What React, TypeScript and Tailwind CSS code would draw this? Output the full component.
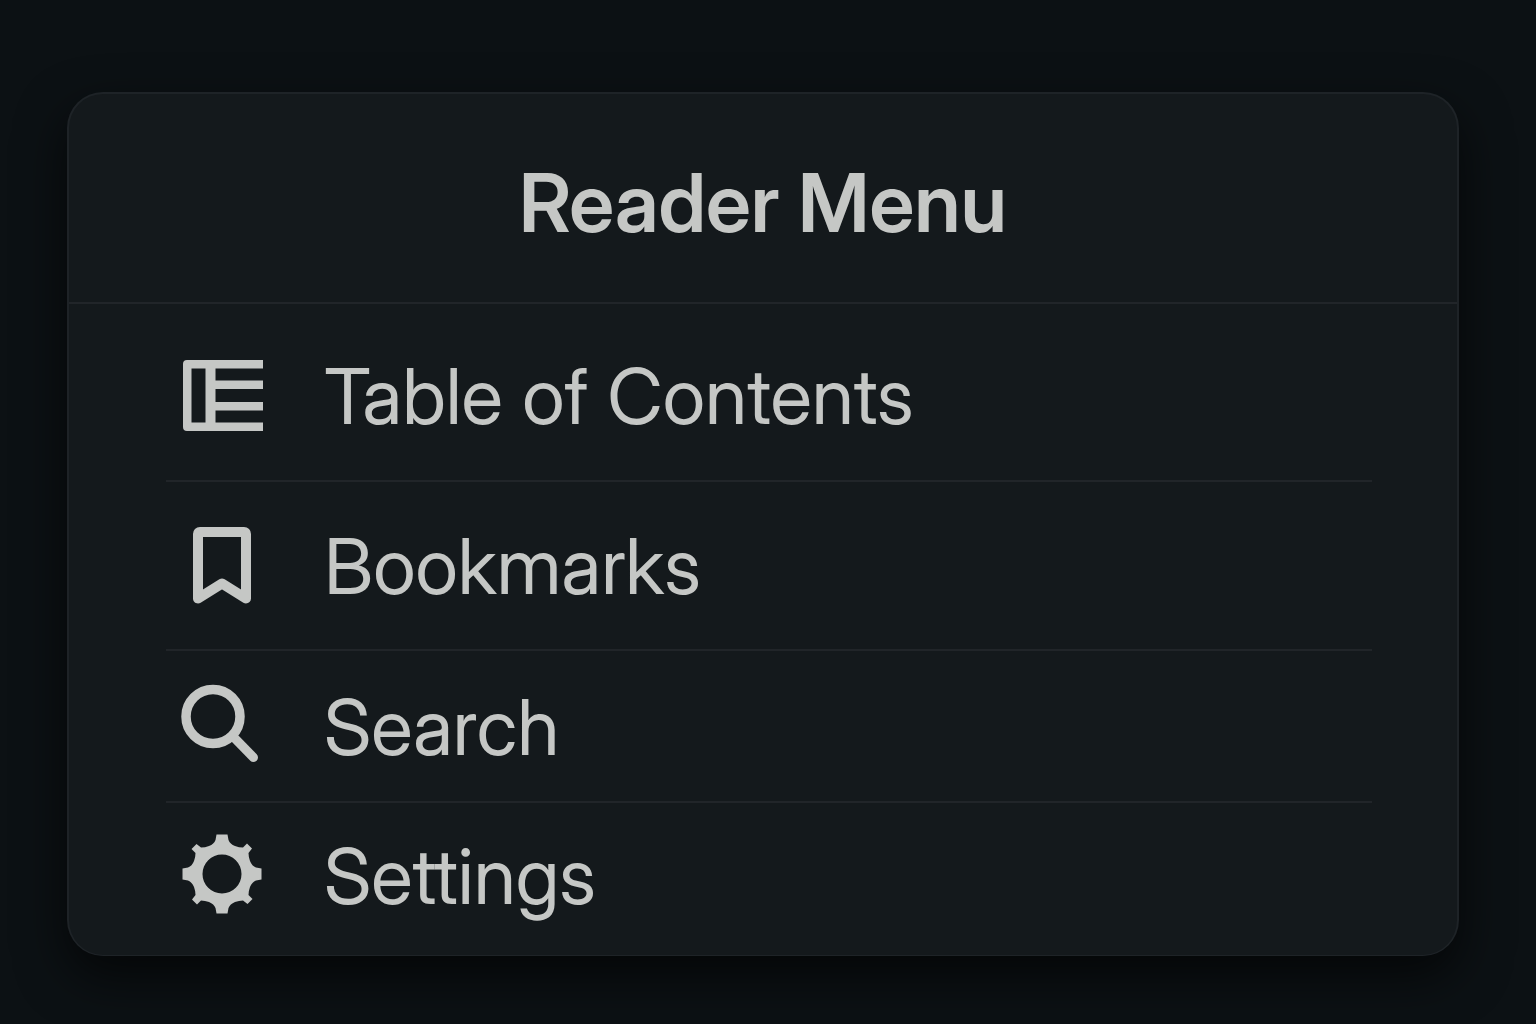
import type { ReactNode } from "react";

function ContentsIcon() {
  return (
    <svg viewBox="0 0 80 80" className="size-20 overflow-visible" fill="currentColor" aria-hidden="true">
      <path
        fillRule="evenodd"
        d="M5 4H81V12.500H33.500V24.500H81V33H33.500V46H81V54.500H33.500V66.500H81V75H5Q1 75 1 71V8Q1 4 5 4ZM9.500 12.500V66.500H23.500V12.500Z"
      />
    </svg>
  );
}

function BookmarkIcon() {
  return (
    <svg viewBox="0 0 80 80" className="size-20" fill="none" stroke="currentColor" strokeWidth="10" strokeLinejoin="round" aria-hidden="true">
      <path d="M18 6H62Q64 6 64 8V72.500L40 57.500L16 72.500V8Q16 6 18 6Z" />
    </svg>
  );
}

function SearchIcon() {
  return (
    <svg viewBox="0 0 80 80" className="size-20 overflow-visible" fill="none" stroke="currentColor" aria-hidden="true">
      <circle cx="31" cy="29.500" r="27" strokeWidth="9.500" />
      <path d="M51 49.500L71.500 70.500" strokeWidth="9" strokeLinecap="round" />
    </svg>
  );
}

function SettingsIcon() {
  return (
    <svg viewBox="-40 -38 80 80" className="size-20 overflow-visible" fill="currentColor" aria-hidden="true">
      <path
        fillRule="evenodd"
        d="M5.500 -39.500L6.500 -34Q8 -30 13 -28Q17 -26.500 21 -26.500L25 -30.500L30 -25.500L26.500 -21Q26.500 -17 28 -13Q30 -8 34 -6.500L39.500 -5.500
        V5.500L34 6.500Q30 8 28 13Q26.500 17 26.500 21L30.500 25L25.500 30L21 26.500Q17 26.500 13 28Q8 30 6.500 34L5.500 39.500
        H-5.500L-6.500 34Q-8 30 -13 28Q-17 26.500 -21 26.500L-25 30.500L-30 25.500L-26.500 21Q-26.500 17 -28 13Q-30 8 -34 6.500L-39.500 5.500
        V-5.500L-34 -6.500Q-30 -8 -28 -13Q-26.500 -17 -26.500 -21L-30.500 -25L-25.500 -30L-21 -26.500Q-17 -26.500 -13 -28Q-8 -30 -6.500 -34L-5.500 -39.500Z
        M19.500 0A19.500 19.500 0 1 0 -19.500 0A19.500 19.500 0 1 0 19.500 0Z"
      />
    </svg>
  );
}

type Item = { label: string; icon: ReactNode; row: string };

const items: Item[] = [
  { label: "Table of Contents", icon: <ContentsIcon />, row: "pt-12 pb-10" },
  { label: "Bookmarks", icon: <BookmarkIcon />, row: "pt-10 pb-[39px]" },
  { label: "Search", icon: <SearchIcon />, row: "pt-8 pb-[30px]" },
  { label: "Settings", icon: <SettingsIcon />, row: "pt-[29px] pb-[35px]" },
];

export default function App() {
  return (
    <main className="min-h-screen bg-[#0c1114] pt-[92px] pr-[77px] pb-[67px] pl-[67px] font-['Inter_Display','Inter',sans-serif] text-[#c5c7c5]">
      <section
        aria-labelledby="menu-title"
        className="overflow-hidden rounded-[36px] border-2 border-b border-[#1e2327] bg-[#14191c] shadow-[0_20px_50px_rgba(0,0,0,0.65)]"
      >
        <header className="border-b-2 border-[#212529] pt-[59px] pb-[49px]">
          <h1 id="menu-title" className="text-center text-[81px] leading-[100px] font-semibold">
            Reader Menu
          </h1>
        </header>
        <nav aria-labelledby="menu-title" className="pr-[85px] pl-[97px]">
          <ul className="divide-y-2 divide-[#212529]">
            {items.map((item) => (
              <li key={item.label}>
                <button type="button" className={`flex w-full cursor-pointer items-center gap-[62px] pl-4 text-left ${item.row}`}>
                  {item.icon}
                  <span className="text-[77px] leading-[88px]">{item.label}</span>
                </button>
              </li>
            ))}
          </ul>
        </nav>
      </section>
    </main>
  );
}
